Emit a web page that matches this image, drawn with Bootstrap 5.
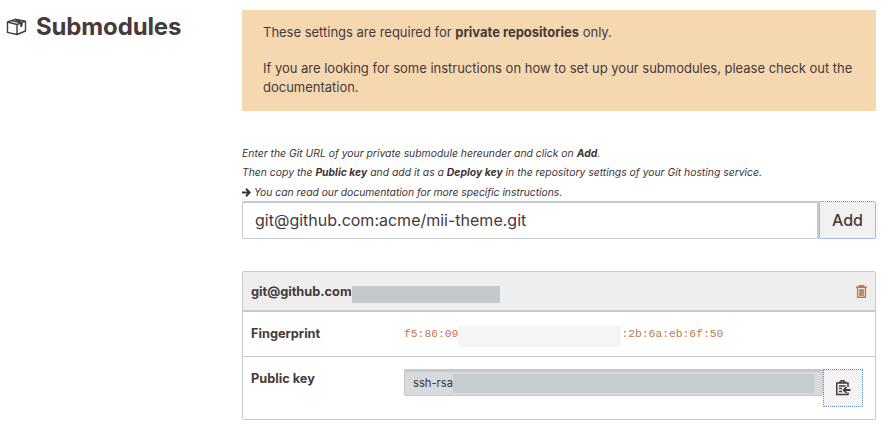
<!DOCTYPE html>
<html lang="en">
<head>
<meta charset="utf-8">
<meta name="viewport" content="width=device-width, initial-scale=1">
<title>Submodules</title>
<link href="https://cdn.jsdelivr.net/npm/bootstrap@5.3.0/dist/css/bootstrap.min.css" rel="stylesheet">
<style>
body{font-family:Inter,"Liberation Sans",sans-serif;color:#463a3c;font-size:13px;line-height:19px;background:#fff;overflow:hidden}
.side{width:242px;padding:13px 0 0 6px}
.side h1{font-size:24px;line-height:28px;font-weight:700;letter-spacing:-.15px}
.side svg{margin:-1px 9px 0 0}
.main{width:634px;padding-top:10px}
.notice{background:#f5d7b0;height:101px;padding:13px 21px 0;margin-bottom:33px;letter-spacing:-.012px}
.notice p{margin-bottom:17px}
.help{font-size:10.38px;line-height:19.4px;font-style:italic;height:57px;white-space:nowrap;color:#3d3437}
.more{letter-spacing:-.035px}
.url .form-control{height:38px;border:1px solid #c4c9ce;border-top-width:2px;border-right-width:2px;border-radius:2px 0 0 2px;padding:0 12px 2px;font-size:16px;color:#463a3c}
.url .btn{width:57px;height:38px;padding:0;border:1px dotted #5b87bd;border-radius:2px;background:#f1f1f1;font-size:16px;font-weight:500;color:#463a3c}
.keys{margin-top:32px;height:149px;border:1px solid #c4c9cd;border-radius:2px}
.keys-head{height:40px;background:#eee;border-bottom:2px solid #c4c9cd;padding:0 8px}
.keys-row{padding-left:8px}
.host{font-size:12.8px;letter-spacing:-.02px}
.label{width:153px;font-weight:700;font-size:12.75px}
.fp{height:45px;border-bottom:1px solid #c4c9cd}
.fp .label{margin-top:-2px}
.mono{font-family:"Liberation Mono",monospace;font-size:11.33px;color:#c0794d}
.mask-host{width:148px;height:17px;background:#c4c9cd;margin-top:6px}
.mask-fp{width:163px;height:21px;background:#f7f5f3;margin-top:5px}
.pk{padding-top:12px}
.field{width:419px;height:27px;border:1px solid #c4c9cd;border-top-width:3px;border-radius:2px;background:#d7dbdd;font-size:11.2px;padding-left:8px;color:#3d3437}
.mask-key{height:19px;width:361px;background:#c7cccf}
.copy{width:40px;height:38px;padding:0;border:1px dotted #5b87bd;border-radius:1px;background:#f3f3f3;color:#463a3c}
</style>
<script src="https://cdn.jsdelivr.net/npm/bootstrap@5.3.0/dist/js/bootstrap.bundle.min.js"></script>
</head>
<body>
<div class="d-flex">
  <aside class="side flex-shrink-0">
    <h1 class="d-flex align-items-center m-0">
      <svg width="21" height="18" viewBox="0 0 21 18" fill="none" stroke="#463a3c" stroke-width="1.4" stroke-linejoin="round"><path d="M1.5 4 9 1.3 19.5 3.2V13L11 16.5 1.5 14.4ZM1.5 4 11 6.5 19.5 3.2M11 6.5V16.5M5.2 2.6 15.3 4.9V9M9 1.6 15 4.2"/><path d="M14.2 5.2 16.6 4.3V8L15.4 7.4 14.2 9Z" fill="#463a3c" stroke="none"/></svg>
      <span>Submodules</span>
    </h1>
  </aside>
  <main class="main flex-shrink-0">
    <div class="notice">
      <p>These settings are required for <strong>private repositories</strong> only.</p>
      <p>If you are looking for some instructions on how to set up your submodules, please check out the documentation.</p>
    </div>
    <div class="help">
      <div>Enter the Git URL of your private submodule hereunder and click on <strong>Add</strong>.</div>
      <div>Then copy the <strong>Public key</strong> and add it as a <strong>Deploy key</strong> in the repository settings of your Git hosting service.</div>
      <div class="more"><svg width="9" height="9" viewBox="0 0 9 9" fill="none" stroke="#3d3437" stroke-width="2"><path d="M0 4.5H7.6M4 .8 7.7 4.5 4 8.2"/></svg> You can read our documentation for more specific instructions.</div>
    </div>
    <div class="url d-flex">
      <input class="form-control flex-fill" type="text" value="git@github.com:acme/mii-theme.git" aria-label="Git URL">
      <button class="btn flex-shrink-0" type="button">Add</button>
    </div>
    <section class="keys">
      <div class="keys-head d-flex align-items-center">
        <strong class="host">git@github.com</strong><span class="mask-host"></span>
        <svg class="ms-auto" width="11" height="13" viewBox="0 0 11 13" fill="none" stroke="#c0794d" stroke-width="1.4"><path d="M0 2.3H11M3.3 2V.8H7.7V2M1.6 2.5V12.2H9.4V2.5M4 4V11M5.5 4V11M7.2 4V11"/></svg>
      </div>
      <div class="keys-row fp d-flex align-items-center">
        <div class="label">Fingerprint</div>
        <span class="mono">f5:86:09</span><span class="mask-fp"></span><span class="mono">:2b:6a:eb:6f:50</span>
      </div>
      <div class="keys-row pk d-flex align-items-start">
        <div class="label">Public key</div>
        <div class="field d-flex align-items-center"><span>ssh-rsa</span><span class="mask-key"></span></div>
        <button class="btn copy d-flex align-items-center justify-content-center" type="button" aria-label="Copy">
          <svg width="16" height="16" viewBox="0 0 16 16" fill="none" stroke="#463a3c" stroke-width="1.5"><path d="M13 7V3H1.8V14.5H13V12.5M4.5 3.5V2.2H6.2V.8H8.8V2.2H10.5V3.5M4 6H10.5M4 8.5H7M4 11.5H7"/><path d="M15.5 10H9M11.5 7.2 8.6 10 11.5 12.8" stroke-width="1.8"/></svg>
        </button>
      </div>
    </section>
  </main>
</div>
</body>
</html>
